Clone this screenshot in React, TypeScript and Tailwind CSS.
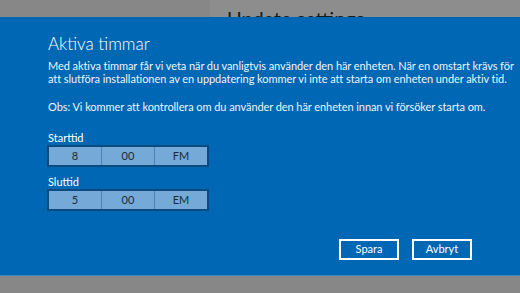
export default function App() {
  const font = { fontFamily: '"Segoe UI", Lato, "Open Sans", sans-serif' };

  const TimeBox = ({ values }: { values: string[] }) => (
    <div className="flex w-[162px] h-[22px] border-2 border-[#0d4a80] bg-[#74a9d8]">
      {values.map((v, i) => (
        <div
          key={i}
          className={`flex-1 flex items-center justify-center text-[11px] text-[#1b2b3c] ${
            i < values.length - 1 ? "border-r border-[#4f83b4]" : ""
          }`}
        >
          {v}
        </div>
      ))}
    </div>
  );

  return (
    <div className="w-[520px] h-[293px] overflow-hidden relative bg-[#878787]" style={font}>
      {/* Background settings window */}
      <div className="flex h-[17px]">
        <div className="w-[210px] bg-[#878787]" />
        <div className="flex-1 bg-[#8d8d8d] overflow-hidden">
          <div className="pl-[17px] pt-[8px] text-[20px] leading-none text-[#1a1a1a] whitespace-nowrap">Update settings</div>
        </div>
      </div>

      {/* Dialog */}
      <div className="h-[259px] bg-[#0067b4] text-white pl-[48px] pr-[48px] pt-[15px] border-b border-[#3b86c4]">
        <div className="text-[17px] leading-[24px] font-light">Aktiva timmar</div>
        <p className="mt-[3px] text-[11px] leading-[13px] tracking-[-0.07px] whitespace-nowrap text-[#eef4fa]">
          Med aktiva timmar får vi veta när du vanligtvis använder den här enheten. När en omstart krävs för
          <br />
          att slutföra installationen av en uppdatering kommer vi inte att starta om enheten under aktiv tid.
        </p>
        <p className="mt-[15px] text-[11px] leading-[13px] tracking-[-0.07px] whitespace-nowrap text-[#eef4fa]">
          Obs: Vi kommer att kontrollera om du använder den här enheten innan vi försöker starta om.
        </p>

        <div className="mt-[18px] text-[11px] leading-[13px]">Starttid</div>
        <div className="mt-[1px] -ml-[1px]">
          <TimeBox values={["8", "00", "FM"]} />
        </div>
        <div className="mt-[8px] text-[11px] leading-[13px]">Sluttid</div>
        <div className="mt-[1px] -ml-[1px]">
          <TimeBox values={["5", "00", "EM"]} />
        </div>

        <div className="flex justify-end gap-[13px] mt-[28px]">
          <button className="w-[60px] h-[21px] border-2 border-white text-[11px] text-white flex items-center justify-center">
            Spara
          </button>
          <button className="w-[60px] h-[21px] border-2 border-white text-[11px] text-white flex items-center justify-center">
            Avbryt
          </button>
        </div>
      </div>
    </div>
  );
}
